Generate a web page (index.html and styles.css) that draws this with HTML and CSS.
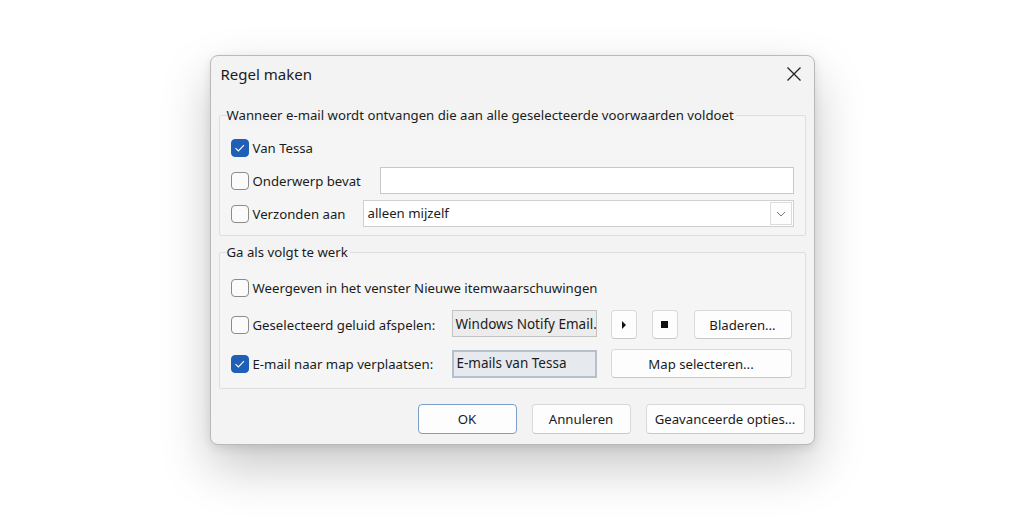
FILE: index.html
```html
<!DOCTYPE html>
<html lang="nl">
<head>
    <meta charset="UTF-8">
    <title>Regel maken</title>
    <link rel="stylesheet" href="styles.css">
</head>
<body>
    <div class="dialog">
        <div class="titlebar">
            <span class="title">Regel maken</span>
            <button class="close-btn" aria-label="Sluiten">
                <svg width="16" height="16" viewBox="0 0 16 16">
                    <path d="M1.5 1.5 L14.5 14.5 M14.5 1.5 L1.5 14.5" stroke="#222" stroke-width="1.3" fill="none"/>
                </svg>
            </button>
        </div>

        <fieldset class="group group-when">
            <legend>Wanneer e-mail wordt ontvangen die aan alle geselecteerde voorwaarden voldoet</legend>
            <div class="row">
                <label class="check"><span class="box checked"></span>Van Tessa</label>
            </div>
            <div class="row">
                <label class="check col-subject"><span class="box"></span>Onderwerp bevat</label>
                <input class="text-input" type="text">
            </div>
            <div class="row">
                <label class="check col-sent"><span class="box"></span>Verzonden aan</label>
                <div class="select">
                    <span class="select-value">alleen mijzelf</span>
                    <span class="select-arrow">
                        <svg width="10" height="6" viewBox="0 0 10 6">
                            <path d="M1 1 L5 5 L9 1" stroke="#777" stroke-width="1" fill="none"/>
                        </svg>
                    </span>
                </div>
            </div>
        </fieldset>

        <fieldset class="group group-do">
            <legend>Ga als volgt te werk</legend>
            <div class="row row-short">
                <label class="check"><span class="box"></span>Weergeven in het venster Nieuwe itemwaarschuwingen</label>
            </div>
            <div class="row">
                <label class="check col-action"><span class="box"></span>Geselecteerd geluid afspelen:</label>
                <div class="readonly">Windows Notify Email.</div>
                <button class="btn btn-icon">
                    <svg width="6" height="8" viewBox="0 0 6 8"><path d="M1 0 L5 4 L1 8 Z" fill="#111"/></svg>
                </button>
                <button class="btn btn-icon">
                    <svg width="7" height="7" viewBox="0 0 7 7"><rect x="0" y="0" width="7" height="7" fill="#111"/></svg>
                </button>
                <button class="btn btn-browse">Bladeren...</button>
            </div>
            <div class="row">
                <label class="check col-action"><span class="box checked"></span>E-mail naar map verplaatsen:</label>
                <div class="readonly folder">E-mails van Tessa</div>
                <button class="btn btn-folder">Map selecteren...</button>
            </div>
        </fieldset>

        <div class="footer">
            <button class="btn btn-ok">OK</button>
            <button class="btn btn-cancel">Annuleren</button>
            <button class="btn btn-advanced">Geavanceerde opties...</button>
        </div>
    </div>
</body>
</html>
```

FILE: styles.css
```css
* {
    box-sizing: border-box;
}

html {
    background-color: #ffffff;
}

body {
    margin: 0;
    min-height: 100vh;
    padding-top: 55px;
    font-family: "Noto Sans", "Open Sans", sans-serif;
    font-size: 13.2px;
    color: #1b1b1b;
}

.dialog {
    width: 605px;
    height: 390px;
    margin: 0 auto;
    background-color: #f3f3f3;
    border: 1px solid #b9b9b9;
    border-radius: 8px;
    box-shadow: 0 22px 50px rgba(0, 0, 0, 0.22), 0 3px 10px rgba(0, 0, 0, 0.1);
    display: flex;
    flex-direction: column;
}

.titlebar {
    height: 35px;
    padding: 0 12px 0 10px;
    display: flex;
    align-items: center;
    justify-content: space-between;
}

.title {
    font-size: 15px;
    margin-top: 1px;
}

.close-btn {
    background: none;
    border: none;
    padding: 0;
    width: 16px;
    height: 16px;
    display: flex;
}

.group {
    margin: 14px 8px 0;
    padding: 0 11px 0 11px;
    border: 1px solid #dedede;
    border-radius: 2px;
    background-color: #f5f5f5;
}

.group legend {
    padding: 0 2px 0 0;
    margin-left: -4px;
    line-height: 20px;
    background-color: #f3f3f3;
}

.group-when {
    height: 131px;
    padding-top: 9px;
    display: flex;
    flex-direction: column;
    gap: 6px;
}

.group-do {
    margin-top: 6px;
    height: 147px;
    padding-top: 14px;
    display: flex;
    flex-direction: column;
    gap: 10px;
}

.row {
    height: 27px;
    display: flex;
    align-items: center;
}

.group-do .row {
    height: 29px;
}

.group-do .row-short {
    height: 24px;
}

.check {
    display: flex;
    align-items: center;
    gap: 4px;
    white-space: nowrap;
}

.box {
    width: 18px;
    height: 18px;
    border: 1px solid #8b8b8b;
    border-radius: 4px;
    background-color: #fbfbfb;
    flex-shrink: 0;
}

.box.checked {
    border-color: #1f5fb5;
    background-color: #1f5fb5;
    background-image: url("data:image/svg+xml;utf8,<svg xmlns='http://www.w3.org/2000/svg' width='18' height='18' viewBox='0 0 18 18'><path d='M4.5 9.2 L7.4 12 L13 6.2' stroke='white' stroke-width='1.1' fill='none'/></svg>");
    background-position: center;
    background-repeat: no-repeat;
}

.col-subject {
    width: 149px;
}

.col-sent {
    width: 132px;
}

.col-action {
    width: 221px;
}

.text-input {
    flex: 1;
    height: 27px;
    border: 1px solid #c9c9c9;
    background-color: #fff;
    font: inherit;
}

.select {
    flex: 1;
    height: 27px;
    border: 1px solid #cfcfcf;
    background-color: #fff;
    display: flex;
    align-items: center;
    justify-content: space-between;
    padding-left: 4px;
}

.select-value {
    margin-top: -1px;
}

.select-arrow {
    width: 22px;
    height: 23px;
    margin-right: 1px;
    border: 1px solid #dcdcdc;
    background-color: #fdfdfd;
    display: flex;
    align-items: center;
    justify-content: center;
}

.readonly {
    width: 145px;
    height: 27px;
    padding: 0 3px;
    border: 1px solid #c2c2c2;
    background-color: #ececec;
    display: flex;
    align-items: center;
    white-space: nowrap;
    overflow: hidden;
    margin-top: -2px;
    font-size: 13.5px;
}

.readonly.folder {
    height: 28px;
    margin-top: 0;
    border: 2px solid #b5c0cc;
    background-color: #e6eaee;
    align-items: flex-start;
    padding-top: 2px;
}

.btn {
    height: 29px;
    background-color: #fdfdfd;
    border: 1px solid #d9d9d9;
    border-bottom-color: #c8c8c8;
    border-radius: 4px;
    font: inherit;
    color: #1b1b1b;
    padding: 0;
    display: flex;
    align-items: center;
    justify-content: center;
}

.btn-icon {
    width: 26px;
    margin-left: 15px;
}

.btn-icon:first-of-type {
    margin-left: 14px;
}

.btn-browse {
    width: 98px;
    margin-left: 16px;
}

.btn-folder {
    width: 181px;
    margin-left: 14px;
}

.footer {
    display: flex;
    justify-content: flex-end;
    gap: 15px;
    padding: 15px 9px 0 0;
}

.footer .btn {
    height: 30px;
}

.btn-ok {
    width: 99px;
    border: 1px solid #7aa0c8;
}

.btn-cancel {
    width: 99px;
}

.btn-advanced {
    width: 159px;
}
```
